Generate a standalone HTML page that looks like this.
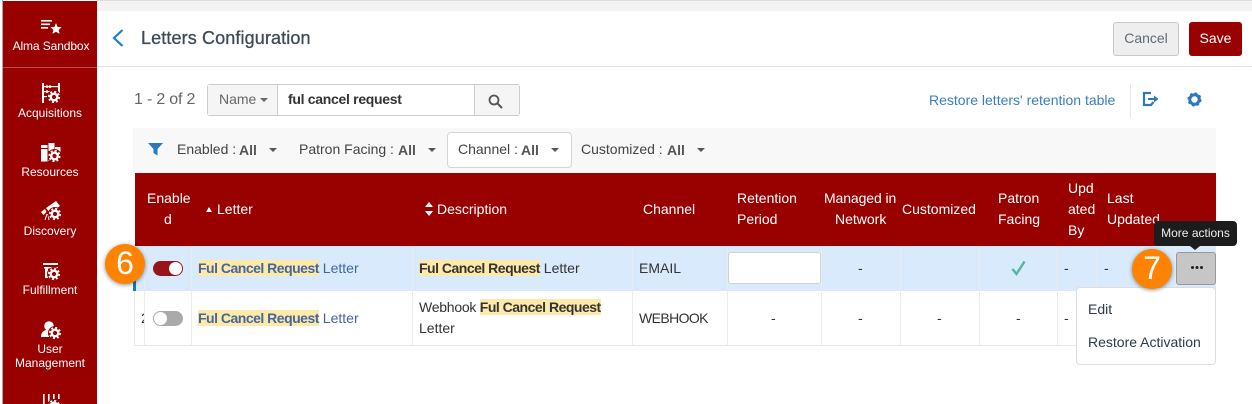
<!DOCTYPE html>
<html><head><meta charset="utf-8"><style>
html,body{margin:0;padding:0;width:1252px;height:404px;overflow:hidden;background:#fff;font-family:"Liberation Sans",sans-serif;font-size:14px;color:#333}
.a{position:absolute;white-space:nowrap}
.n{color:#fff;font-size:12px;line-height:14px;text-align:center;left:3px;width:94px}
.h{color:#fff;font-size:14px;line-height:21px;margin-top:1px}
.v{background:#ececec;width:1px}
mark{background:#fdeaa8;color:inherit;font-weight:bold;letter-spacing:-.5px}
.l{color:#44659f;font-size:14px;line-height:20px}
.o{background:#ff8200;border-radius:50%;width:40px;height:40px;color:#fff;font-size:32px;line-height:38px;text-align:center;box-shadow:0 1px 4px rgba(0,0,0,.45)}
svg{position:absolute;overflow:visible}
</style></head><body>
<div class="a" style="left:97px;top:0;width:1155px;height:11px;background:#f3f3f3;border-top:1px solid #ddd;box-sizing:border-box"></div>
<div class="a" style="left:2px;top:0;width:1px;height:404px;background:#aaa"></div>
<div class="a" style="left:3px;top:1px;width:94px;height:403px;background:#990000"></div>
<div class="a" style="left:3px;top:67px;width:94px;height:1px;background:#b84a4a"></div>

<svg style="left:0;top:0" width="97" height="404" viewBox="0 0 97 404" fill="#fff">
<defs><g id="g"><circle r="7" fill="#990000"/><circle r="3.300" fill="none" stroke="#fff" stroke-width="2.400"/><circle r="5.200" fill="none" stroke="#fff" stroke-width="1.800" stroke-dasharray="2.050 2.030"/></g></defs>
<rect x="41" y="20" width="11" height="1.600"/><rect x="41" y="23.500" width="9" height="1.600"/><rect x="41" y="27" width="7" height="1.600"/>
<path d="M56 23l1.600 3.900 4.100.3-3.100 2.700 1 4-3.600-2.200-3.600 2.200 1-4-3.100-2.700 4.100-.3z"/>
<rect x="42" y="83" width="2" height="20"/><rect x="58" y="83" width="2" height="10"/><rect x="42" y="86" width="17" height="1.200"/><rect x="42" y="91" width="12" height="1.200"/><rect x="42" y="96" width="6" height="1.200"/><circle cx="47" cy="86.600" r="1.300"/><circle cx="50" cy="86.600" r="1.300"/><circle cx="47" cy="91.600" r="1.300"/><use href="#g" x="54" y="97"/>
<rect x="41" y="149" width="6.500" height="12.500"/><rect x="41" y="145" width="6.500" height="3"/><rect x="48.500" y="143" width="6" height="8"/><rect x="55" y="147" width="5.500" height="5"/><rect x="48.500" y="152" width="2" height="9"/><use href="#g" x="54.500" y="156"/>
<path d="M41 212l4-3 1.500 3-3 3zM46 208l10-7 4 5-10 7z"/><path d="M47 214l-2 6M48 214l1 6" stroke="#fff" fill="none"/><use href="#g" x="55" y="214"/>
<rect x="43" y="263" width="15" height="2"/><rect x="44" y="267" width="14" height="1.500"/><rect x="45" y="268" width="3" height="10"/><use href="#g" x="54" y="274"/>
<circle cx="49" cy="326" r="4.800"/><path d="M41 337c0-5 3-7 6-7l4 2 1 5z"/><use href="#g" x="55" y="333"/>
<rect x="43" y="394" width="1.600" height="10"/><rect x="48" y="394" width="1.600" height="10"/><rect x="53" y="394" width="1.600" height="5"/><rect x="58" y="394" width="1.600" height="5"/><use href="#g" x="54" y="406"/>
</svg>
<div class="a n" style="top:39px;letter-spacing:-.1px;left:4px">Alma Sandbox</div>
<div class="a n" style="top:106px">Acquisitions</div>
<div class="a n" style="top:165px">Resources</div>
<div class="a n" style="top:224px">Discovery</div>
<div class="a n" style="top:283px">Fulfillment</div>
<div class="a n" style="top:342px">User</div>
<div class="a n" style="top:356px">Management</div>

<div class="a" style="left:97px;top:66px;width:1155px;height:1px;background:#e3e3e3"></div>
<svg style="left:111px;top:28px" width="14" height="20" viewBox="0 0 14 20"><path d="M11.500 2L3 10l8.500 8" fill="none" stroke="#1f7fc0" stroke-width="2.200"/></svg>
<div class="a" style="left:141px;top:28px;font-size:18px;line-height:21px;color:#3f4a56;letter-spacing:.12px;-webkit-text-stroke:.3px #3f4a56">Letters Configuration</div>

<div class="a" style="left:1113px;top:22px;width:66px;height:34px;box-sizing:border-box;background:#eee;border:1px solid #c8c8c8;border-radius:3px;color:#5f6b77;font-size:14px;line-height:31px;text-align:center">Cancel</div>
<div class="a" style="left:1189px;top:22px;width:53px;height:34px;background:#990000;border-radius:3px;color:#fff;font-size:14px;line-height:33px;text-align:center">Save</div>

<div class="a" style="left:134px;top:90px;font-size:16px;line-height:19px;color:#666;letter-spacing:-.2px">1 - 2 of 2</div>
<div class="a" style="left:207px;top:84px;width:313px;height:32px;box-sizing:border-box;border:1px solid #ccc;border-radius:3px;background:#fff"></div>
<div class="a" style="left:208px;top:85px;width:69px;height:30px;background:#f5f5f5;border-right:1px solid #ccc"></div>
<div class="a" style="left:219px;top:91px;font-size:14px;line-height:17px;color:#666">Name</div>
<div class="a" style="left:260px;top:98px;border:4px solid transparent;border-top-color:#666;border-bottom:0"></div>
<div class="a" style="left:288px;top:91px;font-size:14px;line-height:17px;font-weight:bold;color:#333;letter-spacing:-.3px">ful cancel request</div>
<div class="a" style="left:474px;top:85px;width:44px;height:30px;background:#f5f5f5;border-left:1px solid #ccc"></div>
<svg style="left:488px;top:94px" width="15" height="15" viewBox="0 0 15 15"><circle cx="6" cy="6" r="4.500" fill="none" stroke="#555" stroke-width="1.800"/><path d="M9.500 9.500L14 14" stroke="#555" stroke-width="2"/></svg>

<div class="a" style="left:929px;top:92px;font-size:14px;line-height:17px;color:#3a7ebf">Restore letters' retention table</div>
<div class="a" style="left:1130px;top:84px;width:1px;height:34px;background:#e6e6e6"></div>
<svg style="left:1142px;top:91px" width="17" height="16" viewBox="0 0 17 16"><path d="M9 2H2v12h7l2.500-3" fill="none" stroke="#2f78bd" stroke-width="2.200"/><path d="M6 8h7" stroke="#2f78bd" stroke-width="2"/><path d="M12 4.500L16.500 8 12 11.500z" fill="#2f78bd"/></svg>
<svg style="left:1187px;top:92px" width="15" height="15" viewBox="0 0 15 15"><circle cx="7.500" cy="7.500" r="4.700" fill="none" stroke="#2f78bd" stroke-width="3"/><circle cx="7.500" cy="7.500" r="6" fill="none" stroke="#2f78bd" stroke-width="2.200" stroke-dasharray="2.400 2.310"/></svg>

<div class="a" style="left:133px;top:128px;width:1083px;height:45px;background:#f8f8f8"></div>
<svg style="left:148px;top:143px" width="15" height="13" viewBox="0 0 15 13"><path d="M0 0h15L9.500 6v6.500L5.500 10V6z" fill="#2f78bd"/></svg>
<div class="a" style="left:177px;top:141px;line-height:17px;color:#444">Enabled :</div>
<div class="a" style="left:239px;top:142px;line-height:17px;font-weight:bold;color:#555">All</div>
<div class="a" style="left:269px;top:148px;border:4px solid transparent;border-top-color:#555;border-bottom:0"></div>
<div class="a" style="left:299px;top:141px;line-height:17px;color:#444">Patron Facing :</div>
<div class="a" style="left:398px;top:142px;line-height:17px;font-weight:bold;color:#555">All</div>
<div class="a" style="left:428px;top:148px;border:4px solid transparent;border-top-color:#555;border-bottom:0"></div>
<div class="a" style="left:447px;top:132px;width:125px;height:36px;box-sizing:border-box;background:#fff;border:1px solid #d5d5d5;border-radius:4px"></div>
<div class="a" style="left:458px;top:141px;line-height:17px;color:#444">Channel :</div>
<div class="a" style="left:521px;top:142px;line-height:17px;font-weight:bold;color:#555">All</div>
<div class="a" style="left:551px;top:148px;border:4px solid transparent;border-top-color:#555;border-bottom:0"></div>
<div class="a" style="left:581px;top:141px;line-height:17px;color:#444">Customized :</div>
<div class="a" style="left:667px;top:142px;line-height:17px;font-weight:bold;color:#555">All</div>
<div class="a" style="left:697px;top:148px;border:4px solid transparent;border-top-color:#555;border-bottom:0"></div>

<div class="a" style="left:135px;top:173px;width:1081px;height:73px;background:#990000"></div>
<div class="a" style="left:135px;top:246px;width:1081px;height:45px;background:#d8eafb"></div>
<div class="a" style="left:134px;top:291px;width:1082px;height:54px;background:#fff"></div>
<div class="a" style="left:134px;top:345px;width:1082px;height:1px;background:#e8e8e8"></div>
<div class="a" style="left:134px;top:291px;width:1px;height:54px;background:#e8e8e8"></div>
<div class="a" style="left:133px;top:278px;width:3px;height:13px;background:#1578b8"></div>
<div class="a v" style="left:144px;top:246px;height:99px"></div>
<div class="a v" style="left:191px;top:246px;height:99px"></div>
<div class="a v" style="left:412px;top:246px;height:99px"></div>
<div class="a v" style="left:632px;top:246px;height:99px"></div>
<div class="a v" style="left:727px;top:246px;height:99px"></div>
<div class="a v" style="left:821px;top:246px;height:99px"></div>
<div class="a v" style="left:900px;top:246px;height:99px"></div>
<div class="a v" style="left:979px;top:246px;height:99px"></div>
<div class="a v" style="left:1057px;top:246px;height:99px"></div>
<div class="a v" style="left:1097px;top:246px;height:45px"></div>
<div class="a v" style="left:1175px;top:246px;height:45px"></div>

<div class="a h" style="left:147px;top:187px">Enable</div>
<div class="a h" style="left:164px;top:208px">d</div>
<div class="a" style="left:206px;top:207px;border:3.500px solid transparent;border-bottom:5px solid #fff;border-top:0"></div>
<div class="a h" style="left:217px;top:198px">Letter</div>
<div class="a" style="left:425px;top:202px;border:4px solid transparent;border-bottom:5px solid #fff;border-top:0"></div>
<div class="a" style="left:425px;top:211px;border:4px solid transparent;border-top:5px solid #fff;border-bottom:0"></div>
<div class="a h" style="left:437px;top:198px">Description</div>
<div class="a h" style="left:643px;top:198px">Channel</div>
<div class="a h" style="left:737px;top:187px">Retention</div>
<div class="a h" style="left:737px;top:208px">Period</div>
<div class="a h" style="left:824px;top:187px;letter-spacing:-.1px">Managed in</div>
<div class="a h" style="left:835px;top:208px">Network</div>
<div class="a h" style="left:902px;top:198px">Customized</div>
<div class="a h" style="left:998px;top:187px">Patron</div>
<div class="a h" style="left:998px;top:208px">Facing</div>
<div class="a h" style="left:1068px;top:177px">Upd</div>
<div class="a h" style="left:1068px;top:198px">ated</div>
<div class="a h" style="left:1068px;top:219px">By</div>
<div class="a h" style="left:1107px;top:187px">Last</div>
<div class="a h" style="left:1107px;top:208px">Updated</div>

<div class="a" style="left:153px;top:261px;width:30px;height:15px;border-radius:8px;background:#99141a"></div>
<div class="a" style="left:169px;top:262px;width:13px;height:13px;border-radius:50%;background:#fff"></div>
<div class="a" style="left:153px;top:311px;width:30px;height:15px;border-radius:8px;background:#aaa"></div>
<div class="a" style="left:154px;top:312px;width:13px;height:13px;border-radius:50%;background:#fff"></div>
<div class="a" style="left:141px;top:310px;font-size:14px;line-height:17px;width:3px;overflow:hidden;color:#333">2</div>

<div class="a l" style="left:198px;top:258px"><mark>Ful Cancel Request</mark> Letter</div>
<div class="a l" style="left:198px;top:308px"><mark>Ful Cancel Request</mark> Letter</div>
<div class="a" style="left:419px;top:258px;line-height:20px"><mark>Ful Cancel Request</mark> Letter</div>
<div class="a" style="left:419px;top:297px;line-height:20px"><span style="letter-spacing:-.25px">Webhook </span><mark>Ful Cancel Request</mark></div>
<div class="a" style="left:419px;top:318px;line-height:20px">Letter</div>
<div class="a" style="left:639px;top:258px;line-height:20px">EMAIL</div>
<div class="a" style="left:639px;top:308px;line-height:20px;letter-spacing:-.6px">WEBHOOK</div>
<div class="a" style="left:728px;top:252px;width:93px;height:32px;box-sizing:border-box;background:#fff;border:1px solid #ccd3da;border-radius:3px"></div>

<div class="a" style="left:858px;top:258px;line-height:20px">-</div>
<svg style="left:1011px;top:260px" width="15" height="16" viewBox="0 0 15 16"><path d="M1.500 9l4 5L13.500 1.500" fill="none" stroke="#4fb89e" stroke-width="2.400"/></svg>
<div class="a" style="left:1064px;top:258px;line-height:20px">-</div>
<div class="a" style="left:1104px;top:258px;line-height:20px">-</div>
<div class="a" style="left:771px;top:308px;line-height:20px">-</div>
<div class="a" style="left:858px;top:308px;line-height:20px">-</div>
<div class="a" style="left:937px;top:308px;line-height:20px">-</div>
<div class="a" style="left:1016px;top:308px;line-height:20px">-</div>
<div class="a" style="left:1064px;top:308px;line-height:20px">-</div>

<div class="a" style="left:1154px;top:221px;width:83px;height:25px;background:#1c1c1c;border-radius:4px;color:#eee;font-size:12px;line-height:25px;text-align:center">More actions</div>
<div class="a" style="left:1190px;top:246px;border:5px solid transparent;border-top:4px solid #1c1c1c;border-bottom:0"></div>
<div class="a" style="left:1176px;top:252px;width:40px;height:33px;box-sizing:border-box;background:#c6c6c6;border:1px solid #999;border-radius:3px"></div>
<div class="a" style="left:1191px;top:266px;width:3px;height:3px;border-radius:50%;background:#222;box-shadow:4.500px 0 #222,9px 0 #222"></div>

<div class="a" style="left:1076px;top:287px;width:140px;height:78px;box-sizing:border-box;background:#fff;border:1px solid #ddd;border-radius:4px"></div>
<div class="a" style="left:1088px;top:301px;line-height:17px;color:#2c3a4a">Edit</div>
<div class="a" style="left:1088px;top:334px;line-height:17px;color:#2c3a4a">Restore Activation</div>

<div class="a o" style="left:105px;top:244px">6</div>
<div class="a o" style="left:1132px;top:249px">7</div>
</body></html>
